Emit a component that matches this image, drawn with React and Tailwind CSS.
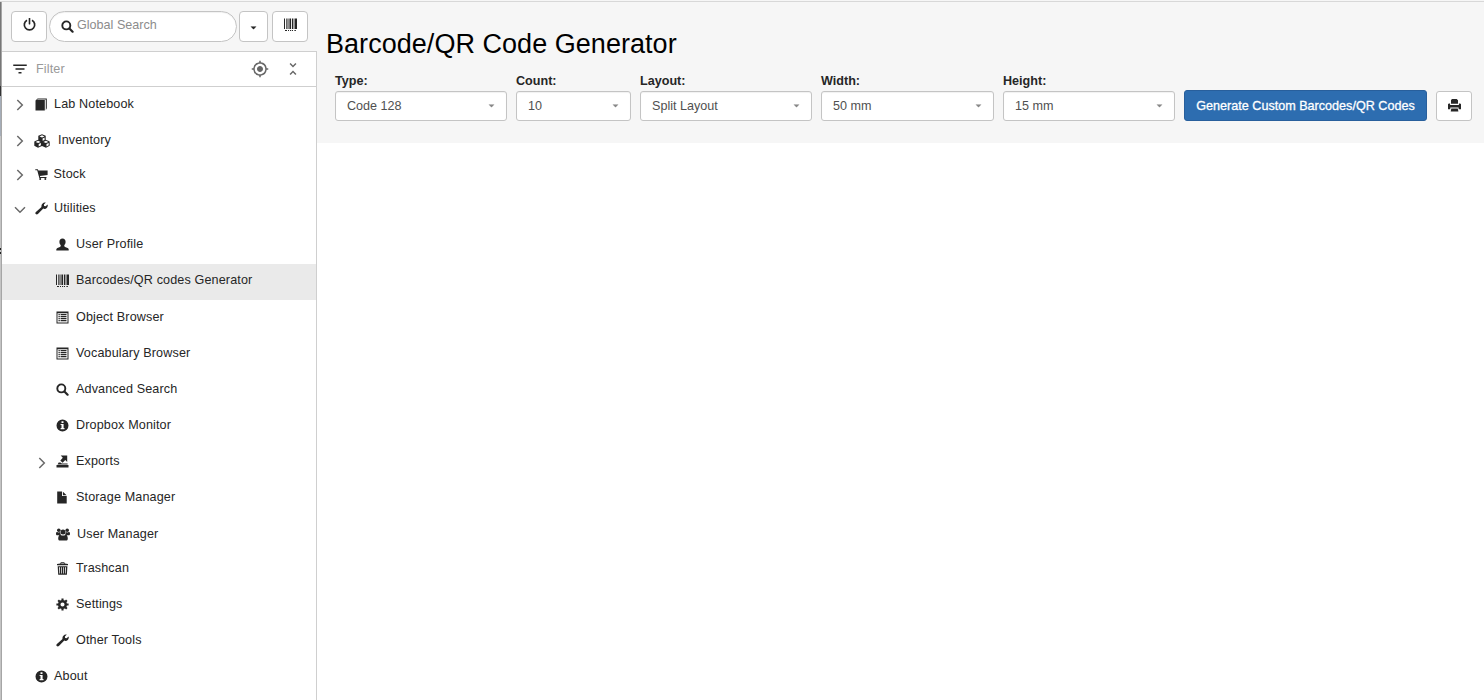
import { MdFilterList, MdGpsFixed, MdUnfoldLess } from 'react-icons/md';

function Glyph({ children, className = 'size-[13px]' }) {
  return (
    <svg viewBox="0 0 13 13" fill="currentColor" className={`block shrink-0 ${className}`}>
      {children}
    </svg>
  );
}

const Power = () => (
  <Glyph>
    <path
      d="M4 2.200A5.200 5.200 0 1 0 9 2.200"
      fill="none"
      stroke="currentColor"
      strokeWidth="1.700"
    />
    <rect x="5.700" y="0" width="1.600" height="6.500" rx="0.4" />
  </Glyph>
);

const Search = () => (
  <Glyph>
    <circle cx="5.300" cy="5.400" r="4" fill="none" stroke="currentColor" strokeWidth="1.900" />
    <path d="M8.400 8.500l3.200 3.200" stroke="currentColor" strokeWidth="2.200" strokeLinecap="round" />
  </Glyph>
);

const Barcode = ({ className }) => (
  <Glyph className={className}>
    <path d="M0 .5h1v10.500H0zM2 .5h.7v10.500H2zM3.500 .5h1v10.500h-1zM5.400 .5h1.700v10.500H5.400zM8 .5h1.100v10.500H8zM9.700 .5h.8v10.500h-.8zM11 .5h2v10.500h-2zM1 12h2v.9H1zM4 12h1v.9H4zM6 12h1.200v.9H6zM8 12h1v.9H8zM10.400 12h1.500v.9h-1.500z" />
  </Glyph>
);

const Book = () => (
  <Glyph>
    <path d="M2.600.4h9.200v9.900l-1 1.900V1.500H2.300v.6h7.500v10.300H.5V2.500z" />
  </Glyph>
);

const Cubes = () => (
  <svg viewBox="0 0 16 14" className="block h-[14px] w-[16px] shrink-0" fill="currentColor">
    <path
      fillRule="evenodd"
      d="M8 .2l3.700 1.500v4l3.600 1.500.4.5v4L12 13.800 8 12 4 13.800.3 11.700v-4l.4-.5 3.600-1.500v-4zM8 1.300L5.500 2.400 8 3.500l2.500-1.100zM8.600 4.500v2.300l2-.9V3.600zM4.100 6.800L1.600 7.900l2.500 1.100 2.500-1.100zM4.700 10v2.400l2.200-1.100V9zM11.900 6.800L9.400 7.900l2.500 1.100 2.500-1.100zM12.500 10v2.400l2.200-1.100V9z"
    />
  </svg>
);

const Cart = () => (
  <Glyph>
    <path d="M.3 1.200h2.500l.6 1.400h9.200v4.400L4.900 8l.3.9h6.300v1H4.300L2.200 2.300H.3z" />
    <circle cx="5.200" cy="11.100" r="1" />
    <circle cx="10.300" cy="11.100" r="1" />
  </Glyph>
);

const Wrench = () => (
  <Glyph>
    <path d="M10.800.6L8.900 2.600l.2 1.500 1.500.2 2-1.900c.6 1.800-.4 3.700-2 4.300-.8.3-1.600.2-2.300-.1L2.900 12c-.6.6-1.500.6-2.100.1s-.6-1.500.1-2.100L6.500 5C5.900 2.500 8.200-.1 10.800.6z" />
  </Glyph>
);

const User = () => (
  <Glyph>
    <path d="M6.500.5c2 0 3.100 1.400 3.100 3.300 0 1.400-.5 2.600-1.300 3.300v.9c0 .5.3.8.8 1l2.500 1c.8.4 1.100.8 1.100 1.500v1H.3v-1c0-.7.4-1.100 1.100-1.500l2.500-1c.5-.2.8-.5.8-1v-.9C3.900 6.400 3.400 5.200 3.400 3.800 3.400 1.900 4.500.5 6.500.5z" />
  </Glyph>
);

const ListAlt = () => (
  <Glyph>
    <path fillRule="evenodd" d="M.5.5h12v12H.5zM1.500 2.200v9.300h10V2.200z" />
    <path d="M2.500 3.100h1.300v1.200H2.500zM2.500 5.100h1.300v1.200H2.500zM2.500 7.100h1.300v1.200H2.500zM2.500 9.100h1.300v1.200H2.500zM4.600 3.100h5.900v1.200H4.600zM4.600 5.100h5.900v1.200H4.600zM4.600 7.100h5.900v1.200H4.600zM4.600 9.100h5.900v1.200H4.600z" />
  </Glyph>
);

const Info = () => (
  <Glyph>
    <path
      fillRule="evenodd"
      d="M6.500.5a6 6 0 1 1 0 12 6 6 0 0 1 0-12zM5.500 2.300v1.700h2V2.300zM4.600 5v1.100h.9v3h-.9v1.100h3.900V9.100h-.9V5z"
    />
  </Glyph>
);

const Export = () => (
  <Glyph>
    <path d="M4.700.6h6.500v6.300L9.300 5 6.600 7.800 4.300 5.600l2.500-2.800zM2.700 7.400h1.700l1.400 1.200h5.800v.9H1.500zM.5 9.900h12v2.700H.5z" />
  </Glyph>
);

const File = () => (
  <Glyph>
    <path d="M1.200.6h4.800v4.500h4.700v7.300H1.200zM6.900.7l3.700 3.500H6.900z" />
  </Glyph>
);

const Group = () => (
  <svg viewBox="0 0 14 13" className="block h-[13px] w-[14px] shrink-0" fill="currentColor">
    <circle cx="2.800" cy="2.300" r="1.800" />
    <circle cx="11.200" cy="2.300" r="1.800" />
    <circle cx="7" cy="4" r="2.500" />
    <path d="M0 5.800c0-1.400.5-2 1.100-1.900 1 .6 2.100.6 3 .2 0 1 .3 1.700.9 2.400-.8 0-1.300.3-1.800.8H1.300C.5 7.300 0 6.900 0 5.800zM14 5.800c0-1.400-.5-2-1.100-1.900-1 .6-2.100.6-3 .2 0 1-.3 1.700-.9 2.400.8 0 1.300.3 1.800.8h1.900c.8 0 1.300-.4 1.300-1.500zM4.500 6.700c1.500 1.200 3.500 1.200 5 0 1.600 0 2.300 1.800 2.300 4 0 1.200-.8 1.900-1.900 1.900H4.100c-1.100 0-1.900-.7-1.900-1.900 0-2.200.7-4 2.300-4z" />
  </svg>
);

const Trash = () => (
  <Glyph>
    <path
      fillRule="evenodd"
      d="M4.400 1.500c0-.8.4-1.200 1-1.200h2.300c.6 0 1 .4 1 1.200l3.300.5v1.300H1V2zM5.200 1.500h2.700v-.4H5.200zM1.700 4.200h9.700l-.5 8.500H2.200zM3.100 5.200l.3 6.400h.6V5.200zM5.100 5.200v6.400h.7V5.200zM7.200 5.200v6.400h.7V5.200zM9.100 5.200v6.400h.6l.3-6.400z"
    />
  </Glyph>
);

const Cog = () => (
  <Glyph>
    <circle cx="6.500" cy="6.500" r="3.300" fill="none" stroke="currentColor" strokeWidth="2.500" />
    <path
      d="M6.500.4v2.200M6.500 10.400v2.200M.4 6.500h2.200M10.400 6.500h2.200M2.200 2.200l1.500 1.500M9.300 9.300l1.500 1.500M2.200 10.800l1.500-1.500M9.300 3.700l1.500-1.500"
      stroke="currentColor"
      strokeWidth="2.100"
    />
  </Glyph>
);

const Printer = () => (
  <Glyph>
    <path d="M3.900.1h4.800l1.300 1.200v3.500H3V1.300zM.8 4.500h1.300v1.400h8.800V4.500h1.300l.8.7v5.100h-2.400V8.500H2.300v1.800H0V5.200zM3.300 9.500h6.500l.6 2.900H2.700z" />
  </Glyph>
);

const Caret = ({ className }) => (
  <svg viewBox="0 0 7 4" className={`block h-[4px] w-[7px] shrink-0 ${className}`} fill="currentColor">
    <path d="M0 0h7L3.500 3.700z" />
  </svg>
);

function Chevron({ open }) {
  return (
    <svg
      viewBox="0 0 12 12"
      className={`block size-[12px] ${open ? 'translate-y-px rotate-90' : ''}`}
      fill="none"
      stroke="currentColor"
      strokeWidth="1.500"
    >
      <path d="M3.300 1l5 5-5 5" />
    </svg>
  );
}

const BRANCHES = [
  { label: 'Lab Notebook', icon: Book, height: 'h-9', gap: 'gap-[6px]', toggle: 'closed' },
  { label: 'Inventory', icon: Cubes, height: 'h-[34px]', gap: 'gap-[8px]', toggle: 'closed', shift: '-ml-px' },
  { label: 'Stock', icon: Cart, height: 'h-[34px]', gap: 'gap-[6px]', toggle: 'closed', shift: '-ml-[0.5px]' },
  { label: 'Utilities', icon: Wrench, height: 'h-9', gap: 'gap-[6px]', toggle: 'open' },
];

const UTILITIES = [
  { label: 'User Profile', icon: User, height: 'h-9' },
  { label: 'Barcodes/QR codes Generator', icon: Barcode, height: 'h-9 mb-px', selected: true },
  { label: 'Object Browser', icon: ListAlt, height: 'h-9' },
  { label: 'Vocabulary Browser', icon: ListAlt, height: 'h-9' },
  { label: 'Advanced Search', icon: Search, height: 'h-9' },
  { label: 'Dropbox Monitor', icon: Info, height: 'h-9' },
  { label: 'Exports', icon: Export, height: 'h-9', toggle: 'closed' },
  { label: 'Storage Manager', icon: File, height: 'h-[37px]' },
  { label: 'User Manager', icon: Group, height: 'h-[34px]' },
  { label: 'Trashcan', icon: Trash, height: 'h-9' },
  { label: 'Settings', icon: Cog, height: 'h-9' },
  { label: 'Other Tools', icon: Wrench, height: 'h-9' },
];

function TreeRow({ label, icon: Icon, height, gap = 'gap-[7px]', toggle, selected, nested, shift = '' }) {
  return (
    <li className={`${height} ${selected ? 'bg-[#eaeaea]' : ''} ${nested ? 'pl-[29px]' : 'pl-[7px]'}`}>
      <div className="flex h-8 items-center">
        <span
          className={`flex w-[22px] shrink-0 justify-center text-[#6a6a6a] ${nested ? 'mr-[3px] pt-[3px]' : 'mr-[4px] pt-[2px]'}`}
        >
          {toggle && <Chevron open={toggle === 'open'} />}
        </span>
        <span className={`flex items-center ${gap} ${shift}`}>
          <span className="pt-px">
            <Icon />
          </span>
          <span className="whitespace-nowrap leading-none tracking-[0.13px]">{label}</span>
        </span>
      </div>
    </li>
  );
}

function Sidebar() {
  return (
    <aside className="flex w-[315px] shrink-0 flex-col">
      <div className="flex h-[49px] items-start bg-[#f6f6f6] pl-[9px] pt-[9px]">
        <button className="flex h-[31px] w-9 justify-center rounded-[4px] border border-[#c4c4c4] bg-white pt-[6px]">
          <Power />
        </button>
        <div className="ml-[2px] flex h-[31px] w-[188px] items-center rounded-full border border-[#c4c4c4] bg-white pl-[11px] shadow-[inset_0_1px_1px_rgba(0,0,0,0.06)]">
          <Search />
          <span className="ml-[3px] pb-[3px] text-[#8c8c8c]">Global Search</span>
        </div>
        <button className="ml-[2px] flex h-[31px] w-[29px] items-center justify-center rounded-[4px] border border-[#c4c4c4] bg-white pt-[2px]">
          <Caret className="scale-90" />
        </button>
        <button className="ml-[4px] flex h-[31px] w-9 justify-center rounded-[4px] border border-[#c4c4c4] bg-white pt-[6px]">
          <Barcode />
        </button>
      </div>
      <div className="flex grow flex-col border-r border-t border-[#cfcfcf] bg-white">
        <div className="flex h-[35px] shrink-0 items-center border-b border-[#cfcfcf] pl-[9px] pr-[14px]">
          <MdFilterList className="size-[18px]" />
          <span className="ml-[7px] grow tracking-[0.13px] text-[#999]">Filter</span>
          <MdGpsFixed className="mr-[15px] size-[18px] text-[#666]" />
          <MdUnfoldLess className="size-[18px] text-[#666]" />
        </div>
        <ul className="pt-px">
          {BRANCHES.map((row) => (
            <TreeRow key={row.label} {...row} />
          ))}
          {UTILITIES.map((row) => (
            <TreeRow key={row.label} nested {...row} />
          ))}
          <TreeRow label="About" icon={Info} height="h-9" gap="gap-[6px]" />
        </ul>
      </div>
    </aside>
  );
}

const FIELDS = [
  { label: 'Type:', value: 'Code 128', width: 'w-[172px]' },
  { label: 'Count:', value: '10', width: 'w-[115px]' },
  { label: 'Layout:', value: 'Split Layout', width: 'w-[172px]' },
  { label: 'Width:', value: '50 mm', width: 'w-[173px]' },
  { label: 'Height:', value: '15 mm', width: 'w-[172px]' },
];

function Field({ label, value, width }) {
  return (
    <div className={`shrink-0 ${width}`}>
      <div className="h-[19px] font-bold leading-[18px]">{label}</div>
      <div className="flex h-[30px] items-center justify-between rounded-[3px] border border-[#c4c4c4] bg-white px-[11px] text-[#505050] shadow-[inset_0_1px_1px_rgba(0,0,0,0.06)]">
        <span>{value}</span>
        <Caret className="scale-90 text-[#888]" />
      </div>
    </div>
  );
}

export default function App() {
  return (
    <div className="flex h-[700px] w-[1484px] flex-col overflow-hidden bg-[#f6f6f6] font-['Liberation_Sans',Arial,sans-serif] text-[12.6px] text-[#262626]">
      <div className="h-[2px] shrink-0 border-b border-[#d8d8d8]" />
      <div className="flex min-h-0 grow">
        <div className="flex w-[2px] shrink-0 flex-col border-r border-[#a6a6a6] bg-[#c4c4c4]">
          <div className="h-[84px] bg-[#777]" />
          <div className="h-[10px] bg-[#333]" />
          <div className="h-[40px] bg-[#a5adb8]" />
          <div className="h-[112px]" />
          <div className="h-[2px] bg-[#222]" />
          <div className="h-[2px]" />
          <div className="h-[2px] bg-[#222]" />
        </div>
        <Sidebar />
        <main className="flex grow flex-col bg-white">
          <div className="h-[141px] shrink-0 bg-[#f6f6f6] pl-[18px]">
            <h1 className="-ml-[9px] pt-[27px] text-[27px] leading-[31px] tracking-[0.04px] text-black">
              Barcode/QR Code Generator
            </h1>
            <div className="mt-[12px] flex items-end gap-[9px]">
              {FIELDS.map((field) => (
                <Field key={field.label} {...field} />
              ))}
              <button className="h-[31px] w-[243px] shrink-0 whitespace-nowrap rounded-[3px] border border-[#285f9c] bg-[#2d6db0] pt-px text-white [-webkit-text-stroke:0.3px_white]">
                Generate Custom Barcodes/QR Codes
              </button>
              <button className="flex h-[30px] w-9 shrink-0 justify-center rounded-[3px] border border-[#c4c4c4] bg-white pt-[7px]">
                <Printer />
              </button>
            </div>
          </div>
        </main>
      </div>
    </div>
  );
}
